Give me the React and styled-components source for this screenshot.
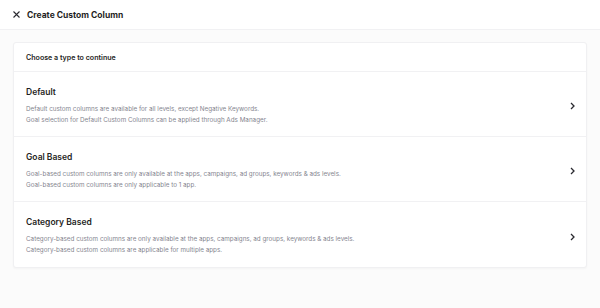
import React from "react";
import styled, { createGlobalStyle } from "styled-components";

const GlobalStyle = createGlobalStyle`
  html, body {
    margin: 0;
    padding: 0;
    background: #fbfbfb;
    font-family: Inter, "Noto Sans", sans-serif;
    color: #1f1f24;
  }
  * { box-sizing: border-box; }
`;

const Page = styled.div`
  width: 600px;
  height: 308px;
  background: #fbfbfb;
`;

const Header = styled.div`
  height: 30px;
  display: flex;
  align-items: center;
  gap: 6px;
  padding: 0 12px;
  background: #fff;
  border-bottom: 1px solid #f1f1f3;
`;

const CloseButton = styled.button`
  border: none;
  background: none;
  padding: 0;
  width: 9px;
  height: 9px;
  display: flex;
  align-items: center;
  justify-content: center;
  color: #2a2a30;
  cursor: pointer;
`;

const Title = styled.h1`
  margin: 0;
  font-size: 8.5px;
  font-weight: 700;
`;

const Body = styled.div`
  padding: 12px 13px;
`;

const Card = styled.div`
  background: #fff;
  border: 1px solid #f0f0f2;
  border-radius: 3px;
  box-shadow: 0 1px 2px rgba(0, 0, 0, 0.03);
`;

const CardHead = styled.div`
  height: 29px;
  display: flex;
  align-items: center;
  padding: 0 12px;
  font-size: 7.1px;
  font-weight: 600;
  border-bottom: 1px solid #f1f1f3;
`;

const Option = styled.div`
  height: 65px;
  display: flex;
  align-items: center;
  padding: 4px 12px 0;
  border-bottom: ${(p) => (p.last ? "none" : "1px solid #f1f1f3")};
  cursor: pointer;
`;

const OptionText = styled.div`
  flex: 1;
  display: flex;
  flex-direction: column;
`;

const OptionTitle = styled.div`
  font-size: 8.5px;
  font-weight: 600;
  margin-bottom: 7px;
`;

const OptionDesc = styled.div`
  font-size: 6.3px;
  line-height: 11px;
  color: #85858f;
`;

const Chevron = styled.div`
  width: 10px;
  display: flex;
  justify-content: center;
  margin-right: -3px;
  color: #2a2a30;
`;

const options = [
  {
    title: "Default",
    lines: [
      "Default custom columns are available for all levels, except Negative Keywords.",
      "Goal selection for Default Custom Columns can be applied through Ads Manager.",
    ],
  },
  {
    title: "Goal Based",
    lines: [
      "Goal-based custom columns are only available at the apps, campaigns, ad groups, keywords & ads levels.",
      "Goal-based custom columns are only applicable to 1 app.",
    ],
  },
  {
    title: "Category Based",
    lines: [
      "Category-based custom columns are only available at the apps, campaigns, ad groups, keywords & ads levels.",
      "Category-based custom columns are applicable for multiple apps.",
    ],
  },
];

const App = () => (
  <Page>
    <GlobalStyle />
    <Header>
      <CloseButton aria-label="Close">
        <svg width="7" height="7" viewBox="0 0 7 7">
          <path d="M0.5 0.5 L6.5 6.5 M6.5 0.5 L0.5 6.5" stroke="currentColor" strokeWidth="1.1" />
        </svg>
      </CloseButton>
      <Title>Create Custom Column</Title>
    </Header>
    <Body>
      <Card>
        <CardHead>Choose a type to continue</CardHead>
        {options.map((o, i) => (
          <Option key={o.title} last={i === options.length - 1}>
            <OptionText>
              <OptionTitle>{o.title}</OptionTitle>
              {o.lines.map((l) => (
                <OptionDesc key={l}>{l}</OptionDesc>
              ))}
            </OptionText>
            <Chevron>
              <svg width="5" height="8" viewBox="0 0 5 8">
                <path d="M1 1 L4 4 L1 7" fill="none" stroke="currentColor" strokeWidth="1.3" />
              </svg>
            </Chevron>
          </Option>
        ))}
      </Card>
    </Body>
  </Page>
);

export default App;
